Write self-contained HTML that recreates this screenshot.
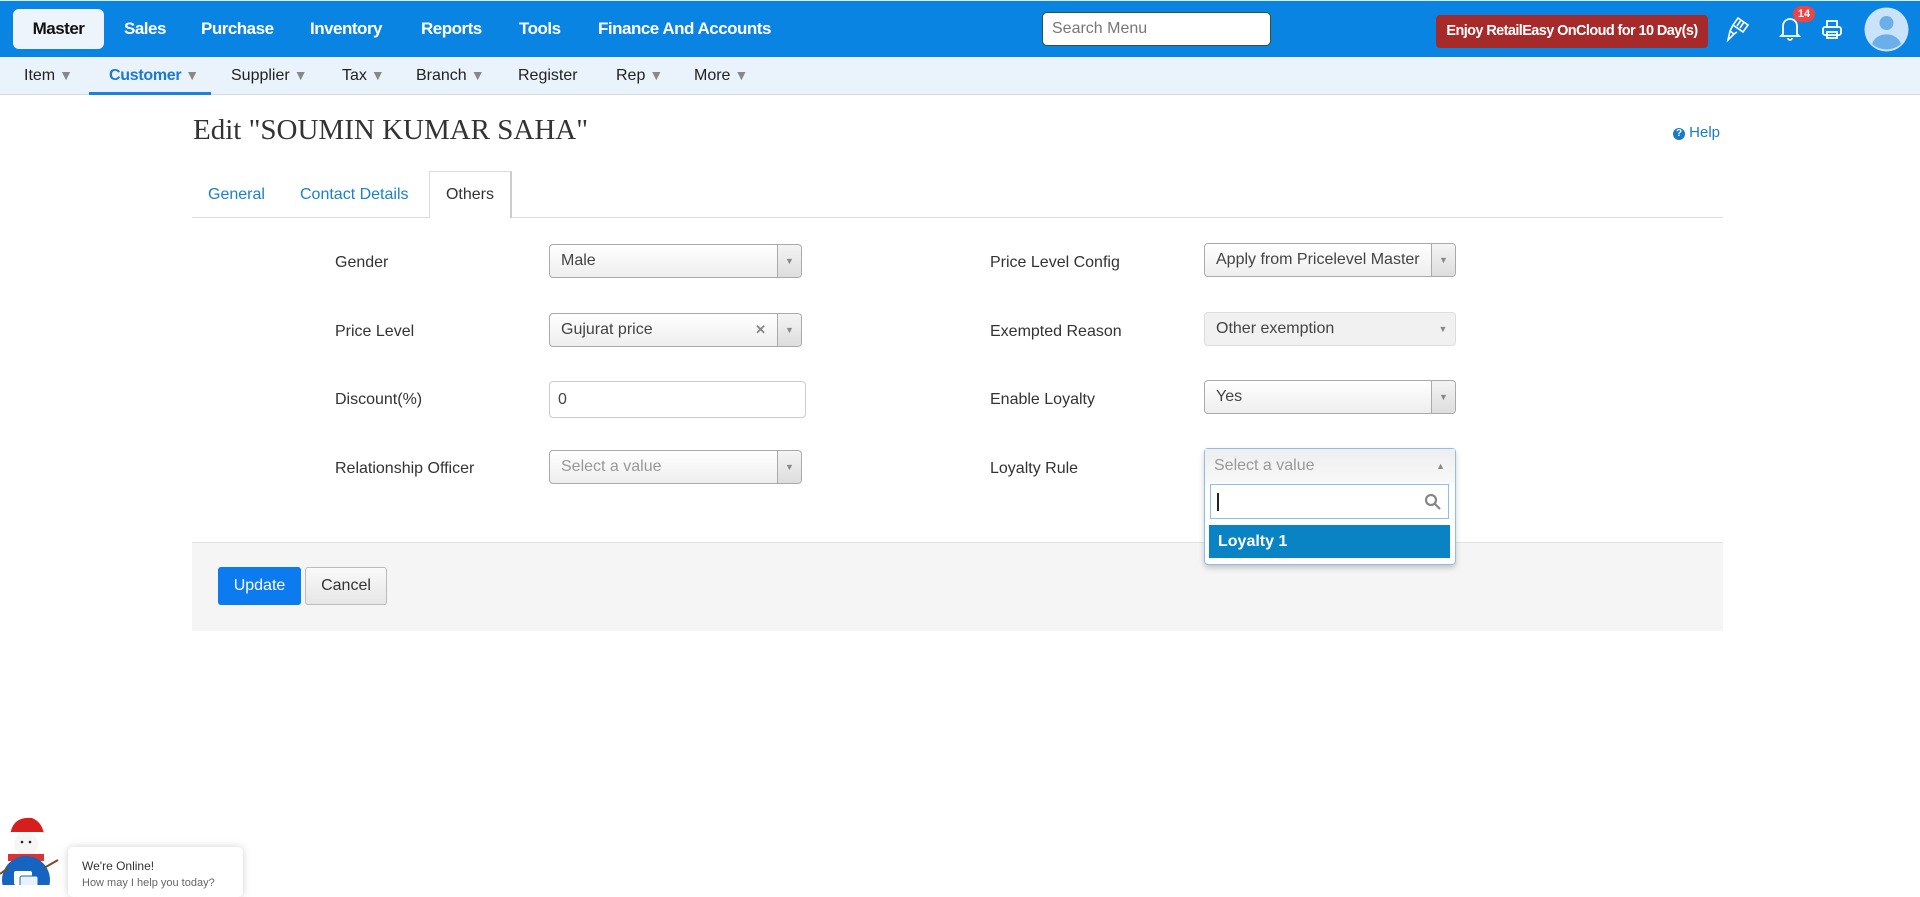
<!DOCTYPE html>
<html><head><meta charset="utf-8"><style>
*{box-sizing:border-box;margin:0;padding:0}
body{width:1920px;height:885px;overflow:hidden;background:#fff;font-family:"Liberation Sans",Arial,sans-serif;color:#333;position:relative}
.abs{position:absolute}
.top{left:0;top:0;width:1920px;height:57px;background:#0a84e3;border-top:1px solid #dfe9f3}
.nav{color:#fff;font-weight:bold;font-size:17px;top:19px;letter-spacing:-0.5px}
.master{left:13px;top:9px;width:91px;height:40px;background:#eef4fb;border-radius:6px;color:#111;font-weight:bold;font-size:17px;text-align:center;line-height:40px;letter-spacing:-0.5px}
.sub{left:0;top:57px;width:1920px;height:38px;background:#eaf2fb;border-bottom:1px solid #cfdce8}
.si{top:67px;font-size:16px;color:#222}
.si .a{color:#888;font-size:14px;margin-left:4px}
.lbl{font-size:16px;color:#333}
.sel{height:34px;border:1px solid #aaa;border-radius:4px;background:linear-gradient(#fff,#eee);font-size:16px;line-height:32px;padding-left:11px;color:#444}
.sel .arr{position:absolute;right:0;top:0;width:24px;height:32px;border-left:1px solid #aaa;background:linear-gradient(#f4f4f4,#ddd);color:#888;font-size:9px;text-align:center;line-height:32px;border-radius:0 4px 4px 0}
</style></head><body>
<div class="abs top"></div>
<div class="abs master">Master</div>
<div class="abs nav" style="left:124px">Sales</div>
<div class="abs nav" style="left:201px">Purchase</div>
<div class="abs nav" style="left:310px">Inventory</div>
<div class="abs nav" style="left:421px">Reports</div>
<div class="abs nav" style="left:519px">Tools</div>
<div class="abs nav" style="left:598px">Finance And Accounts</div>
<div class="abs" style="left:1042px;top:12px;width:229px;height:34px;background:#fff;border:1px solid #2a5a2a;border-radius:5px;font-size:16px;color:#777;line-height:32px;padding-left:9px">Search Menu</div>
<div class="abs" style="left:1436px;top:15px;width:272px;height:33px;background:#a62a2a;border-radius:4px;color:#fff;font-weight:bold;font-size:14.5px;line-height:33px;text-align:center;letter-spacing:-0.6px">Enjoy RetailEasy OnCloud for 10 Day(s)</div>
<svg class="abs" style="left:1726px;top:15px" width="26" height="28" viewBox="0 0 26 28" fill="none" stroke="#fff" stroke-width="1.6"><path d="M12 3l10 7-5 7-10-7z M7 10l-3 6 4 3 3-2 M4 16l-2 9 6-6"/><path d="M15 5l-4 6M18 7l-4 6"/></svg>
<svg class="abs" style="left:1778px;top:14px" width="24" height="28" viewBox="0 0 24 28" fill="none" stroke="#fff" stroke-width="1.8"><path d="M5 20V12a7 7 0 0 1 14 0v8l2 2H3z M10 24a2 2 0 0 0 4 0"/></svg>
<div class="abs" style="left:1793px;top:6px;width:22px;height:16px;background:#ee4444;border-radius:8px;color:#fff;font-size:11px;font-weight:bold;text-align:center;line-height:16px">14</div>
<svg class="abs" style="left:1821px;top:19px" width="22" height="22" viewBox="0 0 22 22" fill="none" stroke="#fff" stroke-width="1.8"><rect x="6" y="2" width="10" height="6"/><rect x="2" y="8" width="18" height="8" rx="2"/><rect x="6" y="13" width="10" height="6"/></svg>
<svg class="abs" style="left:1864px;top:7px" width="45" height="45" viewBox="0 0 45 45"><circle cx="22.5" cy="22.5" r="22" fill="#cbe3f9"/><circle cx="22.5" cy="16" r="7" fill="#6aaeea"/><path d="M8 37a15 13 0 0 1 29 0a22 22 0 0 1-29 0z" fill="#6aaeea"/></svg>

<div class="abs sub"></div>
<div class="abs si" style="left:24px">Item<span class="a">▼</span></div>
<div class="abs si" style="left:109px;color:#1a7bd0;font-weight:bold;letter-spacing:-0.3px">Customer<span class="a">▼</span></div>
<div class="abs" style="left:89px;top:92px;width:122px;height:3px;background:#1a82de"></div>
<div class="abs si" style="left:231px">Supplier<span class="a">▼</span></div>
<div class="abs si" style="left:342px">Tax<span class="a">▼</span></div>
<div class="abs si" style="left:416px">Branch<span class="a">▼</span></div>
<div class="abs si" style="left:518px">Register</div>
<div class="abs si" style="left:616px">Rep<span class="a">▼</span></div>
<div class="abs si" style="left:694px">More<span class="a">▼</span></div>

<div class="abs" style="left:193px;top:114px;font-family:'Liberation Serif',serif;font-size:29px;color:#333">Edit "SOUMIN KUMAR SAHA"</div>
<div class="abs" style="left:1673px;top:124px;font-size:15px;color:#1a7bc4"><span style="display:inline-block;width:12px;height:12px;border-radius:6px;background:#1a7bc4;color:#fff;font-size:10px;text-align:center;line-height:12px;font-weight:bold;vertical-align:1px">?</span> Help</div>

<div class="abs" style="left:192px;top:217px;width:1531px;height:1px;background:#ddd"></div>
<div class="abs" style="left:208px;top:186px;font-size:16px;color:#1a82c8">General</div>
<div class="abs" style="left:300px;top:186px;font-size:16px;color:#1a82c8">Contact Details</div>
<div class="abs" style="left:429px;top:171px;width:83px;height:47px;background:#fff;border:1px solid #ddd;border-bottom:none;border-right:2px solid #ccc;font-size:16px;color:#333;text-align:center;line-height:46px">Others</div>

<div class="abs lbl" style="left:335px;top:254px">Gender</div>
<div class="abs lbl" style="left:335px;top:323px">Price Level</div>
<div class="abs lbl" style="left:335px;top:391px">Discount(%)</div>
<div class="abs lbl" style="left:335px;top:460px">Relationship Officer</div>
<div class="abs sel" style="left:549px;top:244px;width:253px">Male<span class="arr">▼</span></div>
<div class="abs sel" style="left:549px;top:313px;width:253px">Gujurat price<span style="position:absolute;right:35px;color:#888;font-size:13px;font-weight:bold">✕</span><span class="arr">▼</span></div>
<div class="abs" style="left:549px;top:381px;width:257px;height:37px;border:1px solid #ccc;border-radius:4px;font-size:16px;line-height:35px;padding-left:8px;color:#444">0</div>
<div class="abs sel" style="left:549px;top:450px;width:253px;color:#999">Select a value<span class="arr">▼</span></div>

<div class="abs lbl" style="left:990px;top:254px">Price Level Config</div>
<div class="abs lbl" style="left:990px;top:323px">Exempted Reason</div>
<div class="abs lbl" style="left:990px;top:391px">Enable Loyalty</div>
<div class="abs lbl" style="left:990px;top:460px">Loyalty Rule</div>
<div class="abs sel" style="left:1204px;top:243px;width:252px">Apply from Pricelevel Master<span class="arr">▼</span></div>
<div class="abs sel" style="left:1204px;top:312px;width:252px;background:#f1f1f1;border-color:#ddd">Other exemption<span class="arr" style="border:none;background:none">▼</span></div>
<div class="abs sel" style="left:1204px;top:380px;width:252px">Yes<span class="arr">▼</span></div>

<div class="abs" style="left:192px;top:542px;width:1531px;height:89px;background:#f5f5f5;border-top:1px solid #e3e3e3"></div>
<div class="abs" style="left:218px;top:567px;width:83px;height:38px;background:#0d7bf0;border-radius:3px;color:#fff;font-size:16px;text-align:center;line-height:38px">Update</div>
<div class="abs" style="left:305px;top:567px;width:82px;height:38px;background:linear-gradient(#fafafa,#e6e6e6);border:1px solid #bbb;border-radius:3px;color:#333;font-size:16px;text-align:center;line-height:36px">Cancel</div>

<div class="abs" style="left:1204px;top:448px;width:252px;height:117px;background:#fff;border:1px solid #8ebfea;border-radius:4px;box-shadow:0 3px 6px rgba(0,0,0,.2)"></div>
<div class="abs" style="left:1205px;top:449px;width:250px;height:34px;background:linear-gradient(#eee,#f8f8f8);font-size:16px;color:#999;line-height:34px;padding-left:9px">Select a value<span style="position:absolute;right:10px;font-size:9px;color:#888">▲</span></div>
<div class="abs" style="left:1210px;top:484px;width:239px;height:35px;border:1px solid #8ebfea;background:#fff"><span style="position:absolute;left:6px;top:8px;width:2px;height:18px;background:#222"></span>
<svg style="position:absolute;right:6px;top:8px" width="18" height="18" viewBox="0 0 18 18" fill="none" stroke="#888" stroke-width="2.2"><circle cx="7" cy="7" r="5"/><path d="M11 11l5 5"/></svg></div>
<div class="abs" style="left:1209px;top:525px;width:241px;height:33px;background:#0a83c4;color:#fff;font-size:16px;font-weight:bold;line-height:33px;padding-left:9px">Loyalty 1</div>

<svg class="abs" style="left:0;top:806px" width="62" height="79" viewBox="0 0 62 79"><path d="M10 30q2-20 22-18q10 4 12 16z" fill="#d61e1e"/><rect x="9" y="26" width="36" height="6" rx="3" fill="#fff"/><circle cx="26" cy="38" r="12" fill="#f6f6f6"/><circle cx="22" cy="36" r="1.3" fill="#222"/><circle cx="30" cy="36" r="1.3" fill="#222"/><rect x="8" y="48" width="36" height="7" fill="#e03030"/><circle cx="26" cy="74" r="24" fill="#1565c0"/><path d="M44 62l14-8M8 62l-8 6" stroke="#7a4a2a" stroke-width="2"/><rect x="14" y="65" width="18" height="14" rx="2" fill="#fff"/><rect x="20" y="70" width="18" height="12" rx="2" fill="#e8f2ff" stroke="#1565c0"/></svg>
<div class="abs" style="left:68px;top:847px;width:175px;height:50px;background:#fff;border-radius:5px;box-shadow:0 0 8px rgba(0,0,0,.18);padding:12px 14px;font-size:12px;color:#333">We're Online!<div style="font-size:11px;color:#666;margin-top:4px">How may I help you today?</div></div>
</body></html>
